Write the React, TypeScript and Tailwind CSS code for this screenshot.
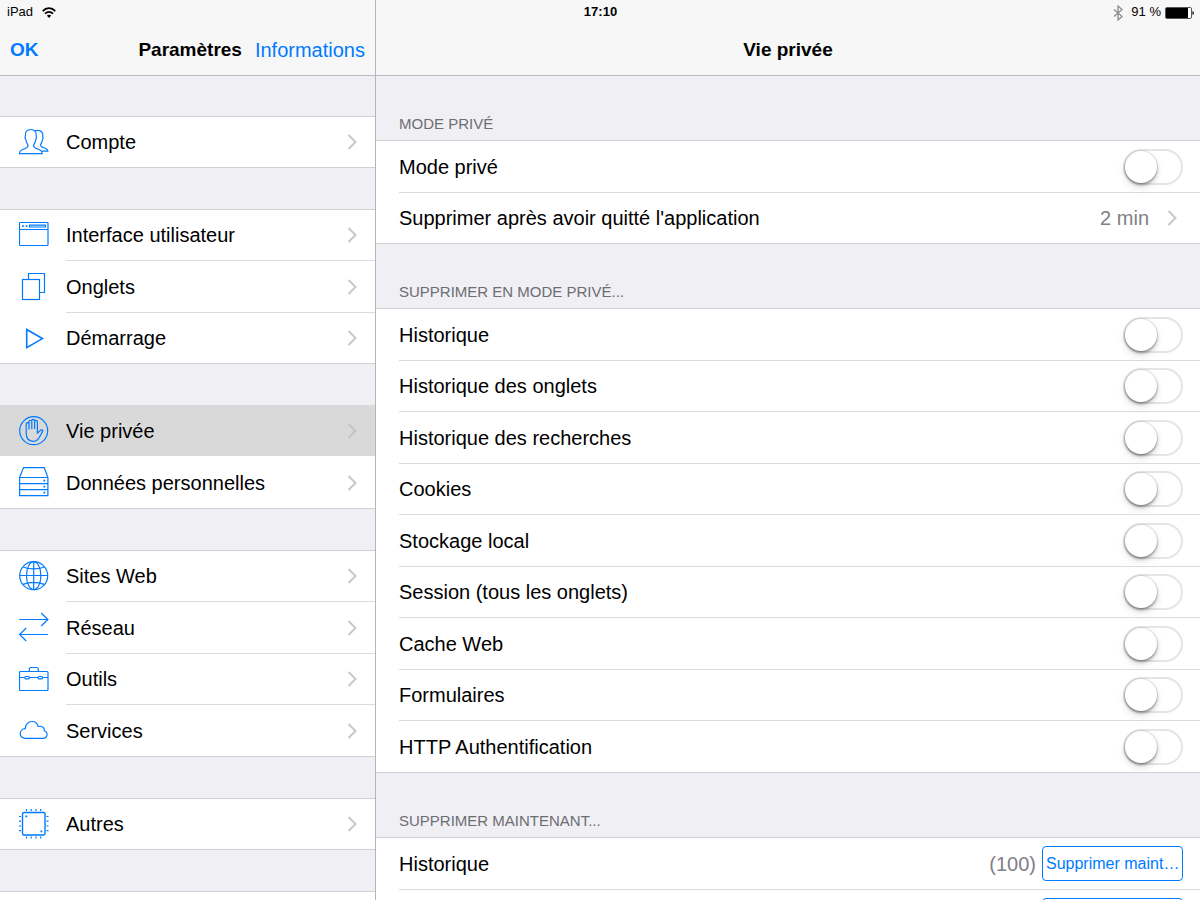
import type { ReactNode } from "react";

type NavItem = { label: string; icon?: ReactNode; active?: boolean };

const AccountIcon = () => (
  <>
    <path d="M.6 26.700C.6 24 1.500 23.300 4 22.300 7 21.200 9 20.700 9 19c0-2-2-3-2.300-7-1-1-.8-2.200-.3-3-.4-4 1.300-6.500 5.400-6.500S17.600 5 17.200 9c.5.8.7 2-.3 3-.3 4-2.300 5-2.300 7 0 1.700 2 2.200 5 3.300 2.500 1 3.600 1.700 3.600 4.400z" />
    <path d="M15.400 4c1.100-.6 2.100-.8 3.400-.7 3.800.2 5.400 2.500 5 6.200.5.8.6 1.900-.2 2.700-.2 3.200-2 4.300-2 6 0 1.500 1.700 1.900 4.200 2.800 2.200.9 3 1.300 3.100 3.200h-6.500" />
  </>
);

const WindowIcon = () => (
  <>
    <rect x=".5" y="2.500" width="28.500" height="23" rx=".8" />
    <path d="M.5 9.500h28.500M10.500 5.200h16v1.800h-16z" />
    <path d="M3 6.100h1.700M6.700 6.100h1.700" strokeWidth="1.900" />
  </>
);

const TabsIcon = () => (
  <>
    <path d="M9.500 8V2.500h16v19h-5" />
    <rect x="3.500" y="8.500" width="17" height="20" />
  </>
);

const PlayIcon = () => <path d="M7.700 6.500v18.200l15.700-9.100z" strokeWidth="1.600" />;

const HandIcon = () => (
  <>
    <circle cx="14.700" cy="14.700" r="14" />
    <path d="M7.200 17V8c0-1.800 2.800-1.800 2.800 0v5.500M10 8V5.600c0-1.800 2.800-1.800 2.800 0v7.400M12.800 5.600V4.800c0-1.800 2.800-1.800 2.800 0V13M15.600 5.800c0-1.800 2.800-1.800 2.800 0v11.400c1.700-.9 2-3.100 4.400-3.300 1.100-.1 1.200.8.8 1.500l-2.500 4.600c-1.400 3-2.900 5.300-6.700 5.300-5.300 0-7.200-3.400-7.200-8.300" />
  </>
);

const DrawerIcon = () => (
  <>
    <path d="M.6 10.500 4.500.6h20.800l3.600 9.900v18.100H.6zM.6 10.500h28.300M.6 16.600h28.300M.6 22.600h28.300" />
    <path d="M24.400 13.600h1.800M24.400 19.600h1.800M24.400 25.600h1.800" strokeWidth="1.800" />
  </>
);

const GlobeIcon = () => (
  <>
    <circle cx="14.700" cy="14.700" r="14" />
    <ellipse cx="14.700" cy="14.700" rx="7.200" ry="14" />
    <path d="M14.700.7v28M.7 14.500h28M4.200 6c6 2.600 15 2.600 21 0M4.200 23.400c6-2.600 15-2.600 21 0" />
  </>
);

const ArrowsIcon = () => (
  <path d="M.3 7.500h28.600M22.200 1l6.700 6.500-6.700 6.500M29 22.500H.6M7.200 16 .6 22.500 7.200 29" />
);

const ToolboxIcon = () => (
  <>
    <rect x=".5" y="7.500" width="28.500" height="19" rx="1" />
    <path d="M10.300 7.500v-2q0-2 2-2h5q2 0 2 2v2M.5 13.500h5.300M10.500 13.500h8.500M23.700 13.500h5.300" />
    <rect x="5.800" y="12.500" width="4.700" height="2.300" rx="1" />
    <rect x="19" y="12.500" width="4.700" height="2.300" rx="1" />
  </>
);

const CloudIcon = () => (
  <path d="M6.500 23.300c-7 0-7-9.400-.2-9.600-.2-3.900 2.900-7.200 6.700-7.200 3.100 0 5.400 2 6.200 5 4-1 6.700 1.500 6.100 4.300 4.200 1.500 3.400 7.500-1.500 7.500z" />
);

const ChipIcon = () => (
  <>
    <rect x="3.500" y="3.500" width="22.500" height="22.500" rx="1.500" strokeWidth="1.400" />
    <path d="M7.500 0v2M12.200 0v2M17 0v2M21.700 0v2M7.500 27.500v2M12.200 27.500v2M17 27.500v2M21.700 27.500v2M0 7.500h2M0 12.200h2M0 17h2M0 21.700h2M27.500 7.500h2M27.500 12.200h2M27.500 17h2M27.500 21.700h2" />
    <path d="M6.400 7.300h1.800M21.500 22.300h1.800" strokeWidth="1.800" />
  </>
);

const groups: NavItem[][] = [
  [{ label: "Compte", icon: <AccountIcon /> }],
  [
    { label: "Interface utilisateur", icon: <WindowIcon /> },
    { label: "Onglets", icon: <TabsIcon /> },
    { label: "Démarrage", icon: <PlayIcon /> },
  ],
  [
    { label: "Vie privée", icon: <HandIcon />, active: true },
    { label: "Données personnelles", icon: <DrawerIcon /> },
  ],
  [
    { label: "Sites Web", icon: <GlobeIcon /> },
    { label: "Réseau", icon: <ArrowsIcon /> },
    { label: "Outils", icon: <ToolboxIcon /> },
    { label: "Services", icon: <CloudIcon /> },
  ],
  [{ label: "Autres", icon: <ChipIcon /> }],
];

const privateItems = [
  "Historique",
  "Historique des onglets",
  "Historique des recherches",
  "Cookies",
  "Stockage local",
  "Session (tous les onglets)",
  "Cache Web",
  "Formulaires",
  "HTTP Authentification",
];

const Chevron = ({ className = "text-[#c7c7cc]" }: { className?: string }) => (
  <svg viewBox="0 0 10 16" className={`h-4 w-[10px] shrink-0 ${className}`} fill="none" stroke="currentColor" strokeWidth="2" aria-hidden="true">
    <path d="m1.500 1 7 7-7 7" />
  </svg>
);

const StatusBar = () => (
  <div className="absolute inset-x-0 top-0 grid h-[25px] grid-cols-3 items-center pr-[6px] pl-[7px] text-[13px]">
    <div className="flex items-center gap-[9px]">
      <span>iPad</span>
      <svg viewBox="0 0 14 11" className="h-[11px] w-[14px]" fill="none" stroke="currentColor" strokeWidth="1.800" aria-hidden="true">
        <path d="M.7 4.100c3.600-3.900 9-3.900 12.600 0M3 6.700c2.400-2.500 5.600-2.500 8 0" />
        <path d="M7 10.900 4.800 8.600c1.300-1.200 3.100-1.200 4.400 0z" fill="currentColor" stroke="none" />
      </svg>
    </div>
    <span className="text-center font-bold">17:10</span>
    <div className="flex items-center justify-end gap-1">
      <svg viewBox="0 0 10 16" className="mr-1 h-4 w-[10px] text-[#8e8e93]" fill="none" stroke="currentColor" strokeWidth="1.300" aria-hidden="true">
        <path d="m1 4.500 8 7-4 3.500V1l4 3.500-8 7" />
      </svg>
      <span>91 %</span>
      <svg viewBox="0 0 29 12" className="h-3 w-[29px]" aria-hidden="true">
        <rect x=".5" y=".5" width="26" height="11" rx="1.500" fill="#fff" stroke="#555" />
        <path d="M1 1h22v10H1z" />
        <path d="M27.500 4c1.800.6 1.800 3.400 0 4z" />
      </svg>
    </div>
  </div>
);

const SettingRow = ({ children }: { children: ReactNode }) => (
  <li className="group h-[52px] border-[#d0d0d4] pl-[23px] first:border-t even:h-[51px]">
    <div className="flex h-full items-center border-t border-[#dcdcdf] pr-[17px] group-first:border-t-0">{children}</div>
  </li>
);

const ToggleRow = ({ label }: { label: string }) => (
  <SettingRow>
    <label className="flex flex-1 items-center justify-between">
      <span>{label}</span>
      <input
        type="checkbox"
        role="switch"
        className="h-9 w-[60px] appearance-none rounded-full border-2 border-[#e5e5e5] bg-white before:block before:size-8 before:rounded-full before:bg-white before:shadow-[0_0_0_1px_rgba(0,0,0,0.08),0_2px_3px_rgba(0,0,0,0.35),0_4px_8px_rgba(0,0,0,0.12)] checked:bg-[#4cd964] checked:before:translate-x-6"
      />
    </label>
  </SettingRow>
);

const Section = ({ title, children }: { title: string; children: ReactNode }) => (
  <section>
    <h2 className="flex h-16 items-end pb-[7px] pl-[23px] text-[15px] leading-[18px] text-[#6d6d72] uppercase">{title}</h2>
    <ul className="border-b border-[#d0d0d4] bg-white">{children}</ul>
  </section>
);

const deleteButton =
  "h-[35px] w-[141px] shrink-0 rounded border border-[#007aff] px-[3px] text-left text-base whitespace-nowrap text-[#007aff]";

const App = () => {
  return (
    <div className="relative flex h-screen overflow-hidden bg-[#efeff4] font-['Liberation_Sans',Arial,sans-serif] text-xl text-black">
      <aside className="w-[376px] shrink-0 border-r border-[#b5b5b9]">
        <header className="flex h-[76px] items-end border-b border-[#b9b9bb] bg-[#f7f7f8] px-[10px] pb-[11px]">
          <button className="text-[19px] leading-7 font-bold text-[#007aff]">OK</button>
          <h1 className="ml-auto text-[19px] leading-7 font-bold">Paramètres</h1>
          <button className="ml-[13px] text-[#007aff]">Informations</button>
        </header>

        <nav className="flex flex-col gap-[41px] pt-10">
          {groups.map((items) => (
            <ul key={items[0].label} className="border-b border-[#d0d0d4] bg-white">
              {items.map(({ label, icon, active }, i) => (
                <li
                  key={label}
                  className={`group h-[51px] first:border-t even:h-[52px] ${active ? "border-[#d9d9d9] bg-[#d9d9d9]" : "border-[#d0d0d4]"}`}
                >
                  <a href="#" className="flex h-full items-center pl-[19px]">
                    <svg viewBox="0 0 30 30" className="mr-[17px] size-[30px] shrink-0" fill="none" stroke="#007aff" strokeWidth="1.200" aria-hidden="true">
                      {icon}
                    </svg>
                    <span
                      className={`flex h-full flex-1 items-center justify-between border-t pr-[18px] group-first:border-t-0 ${items[i - 1]?.active ? "border-transparent" : "border-[#dcdcdf]"}`}
                    >
                      {label}
                      <Chevron className={active ? "text-[#c4c4c8]" : undefined} />
                    </span>
                  </a>
                </li>
              ))}
            </ul>
          ))}
          <div className="h-[51px] border-t border-[#d0d0d4] bg-white" />
        </nav>
      </aside>

      <main className="min-w-0 flex-1">
        <header className="flex h-[76px] items-end justify-center border-b border-[#b9b9bb] bg-[#f7f7f8] pb-[11px]">
          <h1 className="text-[19px] leading-7 font-bold">Vie privée</h1>
        </header>

        <Section title="Mode privé">
          <ToggleRow label="Mode privé" />
          <SettingRow>
            <button className="flex flex-1 items-center pr-[6px] text-left">
              <span>Supprimer après avoir quitté l'application</span>
              <span className="mr-[18px] ml-auto text-[#808085]">2 min</span>
              <Chevron />
            </button>
          </SettingRow>
        </Section>

        <Section title="Supprimer en mode privé...">
          {privateItems.map((label) => (
            <ToggleRow key={label} label={label} />
          ))}
        </Section>

        <Section title="Supprimer maintenant...">
          <SettingRow>
            <span>Historique</span>
            <span className="mr-[6px] ml-auto text-[#808085]">(100)</span>
            <button className={deleteButton}>Supprimer maint…</button>
          </SettingRow>
          <SettingRow>
            <span className="flex-1" />
            <button className={deleteButton} aria-label="Supprimer" />
          </SettingRow>
        </Section>
      </main>

      <StatusBar />
    </div>
  );
};

export default App;
